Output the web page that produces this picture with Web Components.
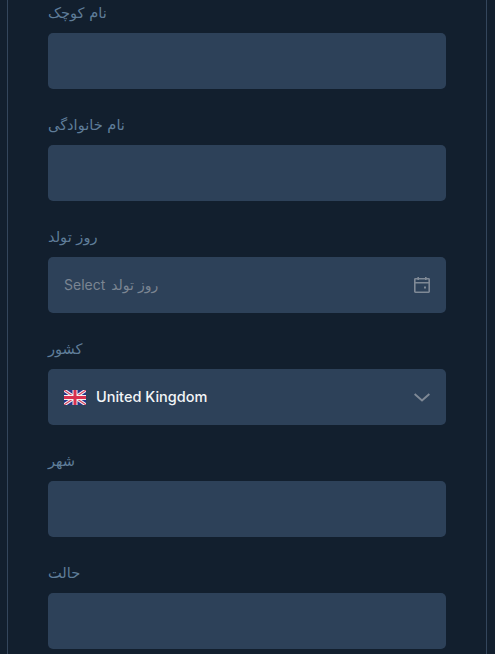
<!DOCTYPE html>
<html><head><meta charset="utf-8"><style>
html,body{margin:0;height:100%;background:#121f2e;overflow:hidden}
body{font-family:Inter,"DejaVu Sans",sans-serif}
</style></head><body>
<template id="panel-t"><style>
:host{display:flex;flex-direction:column;gap:24px;box-sizing:border-box;margin:0 0 0 7px;width:480px;height:654px;padding:1px 40px 0 40px;background:#121f2e;border-left:1px solid #34465c;border-right:1px solid #34465c;overflow:hidden}
</style><slot></slot></template>
<template id="field-t"><style>
:host{display:flex;flex-direction:column;gap:8px;flex:none}
.l{font:14.6px/24px "DejaVu Sans",sans-serif;color:#5f7d99;height:24px;text-align:left}
.b{box-sizing:border-box;height:56px;background:#2d4159;border-radius:5px;display:flex;align-items:center;padding:0 16px;gap:12px}
</style><div class="l" dir="ltr"></div><div class="b"><slot></slot></div></template>
<template id="date-t"><style>
:host{display:flex;align-items:center;justify-content:space-between;flex:1}
span{font:14px/20px Inter,"DejaVu Sans",sans-serif;color:#7b8592}
i{font-style:normal;margin-right:2px}
svg{display:block}
</style><span><i>Select</i> روز تولد</span><svg width="16" height="16" viewBox="0 0 16 16" fill="none" stroke="#7f8996" stroke-width="1.6"><rect x=".8" y="1.8" width="14.4" height="13.4" rx=".6"/><path d="M.8 5.8h14.4M4.2 0v3M11.8 0v3"/><rect x="10" y="9.5" width="2" height="2" fill="#7f8996" stroke="none"/></svg></template>
<template id="select-t"><style>
:host{display:flex;align-items:center;gap:10px;flex:1}
span{font:500 14.5px/20px Inter,sans-serif;color:#f3f5f7;flex:1}
svg{display:block}
</style><svg width="22" height="15" viewBox="0 0 22 15"><rect width="22" height="15" fill="#25348a" rx="1"/><path d="M0 0L22 15M22 0L0 15" stroke="#f2f2f2" stroke-width="3.2"/><path d="M0 0L22 15M22 0L0 15" stroke="#d8415f" stroke-width="1.1"/><path d="M11 0V15M0 7.5H22" stroke="#f2f2f2" stroke-width="5"/><path d="M11 0V15M0 7.5H22" stroke="#d8304f" stroke-width="3"/></svg><span>United Kingdom</span><svg width="16" height="9" viewBox="0 0 16 9" fill="none" stroke="#7f8996" stroke-width="2"><path d="M.6 1l7.4 6.4 7.4-6.4"/></svg></template>
<x-panel>
<x-field label="نام کوچک"></x-field>
<x-field label="نام خانوادگی"></x-field>
<x-field label="روز تولد"><x-date></x-date></x-field>
<x-field label="کشور"><x-select></x-select></x-field>
<x-field label="شهر"></x-field>
<x-field label="حالت"></x-field>
</x-panel>
<script>
function simple(tag,id){customElements.define(tag,class extends HTMLElement{constructor(){super();this.attachShadow({mode:'open'}).appendChild(document.getElementById(id).content.cloneNode(true));}});}
simple('x-panel','panel-t');simple('x-date','date-t');simple('x-select','select-t');
customElements.define('x-field',class extends HTMLElement{constructor(){super();this.attachShadow({mode:'open'}).appendChild(document.getElementById('field-t').content.cloneNode(true));}
connectedCallback(){this.shadowRoot.querySelector('.l').textContent=this.getAttribute('label');}});
</script>
</body></html>
